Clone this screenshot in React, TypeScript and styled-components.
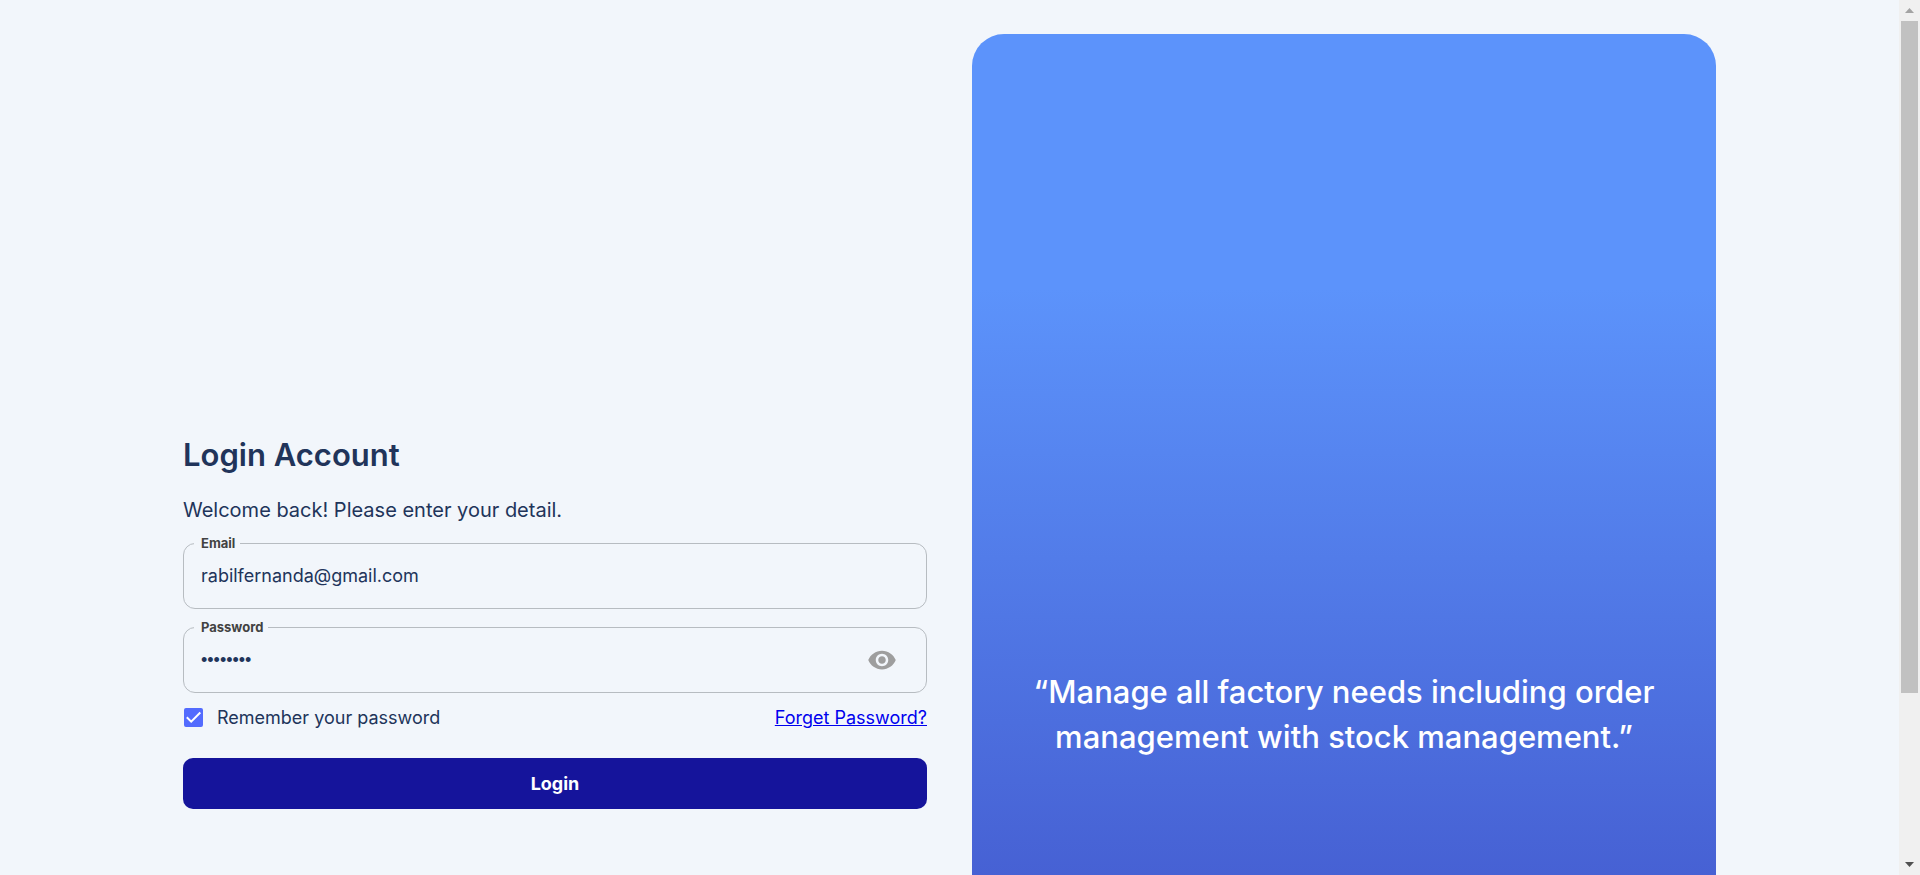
import { useState } from 'react';
import styled, { createGlobalStyle } from 'styled-components';
import { MdVisibility } from 'react-icons/md';

const GlobalStyle = createGlobalStyle`
  *, *::before, *::after { box-sizing: border-box; }
  body {
    margin: 0;
    background: #f2f6fb;
    color: #21345a;
    font-family: Inter, "Open Sans", sans-serif;
  }
`;

const Shell = styled.div`
  display: flex;
  height: 100vh;
  overflow: hidden;
`;

const Viewport = styled.main`
  flex: 1;
  min-width: 0;
  overflow-y: auto;
  scrollbar-width: none;
`;

const Columns = styled.div`
  display: grid;
  grid-template-columns: 1fr 1fr;
  gap: 45px;
  max-width: 1533px;
  margin: 0 auto;
  padding: 34px 0;
`;

const LoginForm = styled.form`
  display: flex;
  flex-direction: column;
  padding-top: 400px;
`;

const Title = styled.h1`
  margin: 0;
  font-size: 31px;
  line-height: 42px;
  font-weight: 600;
`;

const Subtitle = styled.p`
  margin: 20px 0 12px;
  font-size: 20px;
  line-height: 28px;
`;

const Field = styled.fieldset`
  margin: 0 0 11px;
  padding: 0 10px;
  min-width: 0;
  height: 73px;
  border: 1px solid #b7bcc1;
  border-radius: 12px;
`;

const Legend = styled.legend`
  padding: 0 5px 0 7px;
  font-size: 13px;
  line-height: 14px;
  font-weight: 700;
  color: #424242;
`;

const FieldRow = styled.div`
  display: flex;
  align-items: center;
  height: 58px;
  padding: 0 19px 6px 7px;
`;

const Input = styled.input`
  flex: 1;
  min-width: 0;
  padding: 0;
  border: 0;
  outline: 0;
  background: transparent;
  color: inherit;
  font: inherit;
  font-size: 18px;
  line-height: 24px;

  &[type='password'] {
    font-family: "Liberation Sans", sans-serif;
  }
`;

const IconButton = styled.button`
  display: flex;
  padding: 0;
  border: 0;
  background: none;
  color: #9e9e9e;
  font-size: 30px;
  cursor: pointer;
`;

const Options = styled.div`
  display: flex;
  align-items: center;
  justify-content: space-between;
  font-size: 18px;
  line-height: 28px;
`;

const Remember = styled.label`
  display: flex;
  align-items: center;
  gap: 14px;
`;

const CheckCell = styled.span`
  display: grid;
  place-items: center;
  margin-left: 1px;
  padding-bottom: 2px;

  > * { grid-area: 1 / 1; }
  svg { pointer-events: none; }
`;

const Checkbox = styled.input`
  appearance: none;
  width: 19px;
  height: 19px;
  margin: 0;
  border: 2px solid #536bfe;
  border-radius: 2px;

  &:checked { background: #536bfe; }
`;

const Link = styled.a`
  color: #0000ee;
`;

const Submit = styled.button`
  height: 51px;
  margin-top: 26px;
  border: 0;
  border-radius: 10px;
  background: #15149b;
  color: #fff;
  font: inherit;
  font-size: 18px;
  font-weight: 700;
  cursor: pointer;
`;

const Hero = styled.section`
  display: flex;
  justify-content: center;
  min-height: 1016px;
  padding: 635px 48px 0;
  border-radius: 32px;
  background: linear-gradient(180deg, #5c93fb 25%, #4052c8 100%);
`;

const Quote = styled.p`
  margin: 0;
  max-width: 640px;
  color: #fff;
  font-size: 31px;
  line-height: 45px;
  font-weight: 500;
  text-align: center;
`;

const ScrollTrack = styled.div`
  display: flex;
  flex-direction: column;
  align-items: center;
  width: 21px;
  background: #f0f0f0;
`;

const ScrollArrow = styled.div`
  display: grid;
  place-items: center;
  height: 21px;
`;

const ScrollRail = styled.div`
  flex: 1;
  width: 17px;
`;

const ScrollThumb = styled.div`
  height: calc(81% - 3px);
  background: #c1c1c1;
`;

export default function App() {
  const [shown, setShown] = useState(false);
  const [remember, setRemember] = useState(true);

  return (
    <Shell>
      <GlobalStyle />
      <Viewport>
        <Columns>
          <LoginForm onSubmit={(e) => e.preventDefault()}>
            <Title>Login Account</Title>
            <Subtitle>Welcome back! Please enter your detail.</Subtitle>
            <Field>
              <Legend><label htmlFor="email">Email</label></Legend>
              <FieldRow>
                <Input id="email" type="email" defaultValue="rabilfernanda@gmail.com" />
              </FieldRow>
            </Field>
            <Field>
              <Legend><label htmlFor="password">Password</label></Legend>
              <FieldRow>
                <Input id="password" type={shown ? 'text' : 'password'} defaultValue="password" />
                <IconButton type="button" aria-label="Toggle password visibility" onClick={() => setShown(!shown)}>
                  <MdVisibility />
                </IconButton>
              </FieldRow>
            </Field>
            <Options>
              <Remember>
                <CheckCell>
                  <Checkbox type="checkbox" checked={remember} onChange={(e) => setRemember(e.target.checked)} />
                  {remember && (
                    <svg width="19" height="19" viewBox="0 0 19 19" fill="none" stroke="#fff" strokeWidth="2">
                      <path d="M2.8 9.2 7.2 13.6 16.3 4.5" />
                    </svg>
                  )}
                </CheckCell>
                Remember your password
              </Remember>
              <Link href="#forget">Forget Password?</Link>
            </Options>
            <Submit type="submit">Login</Submit>
          </LoginForm>
          <Hero>
            <Quote>“Manage all factory needs including order management with stock management.”</Quote>
          </Hero>
        </Columns>
      </Viewport>
      <ScrollTrack aria-hidden="true">
        <ScrollArrow>
          <svg width="9" height="5" viewBox="0 0 9 5"><path d="M0 5 4.5 0 9 5Z" fill="#a3a3a3" /></svg>
        </ScrollArrow>
        <ScrollRail><ScrollThumb /></ScrollRail>
        <ScrollArrow>
          <svg width="9" height="5" viewBox="0 0 9 5"><path d="M0 0H9L4.5 5Z" fill="#505050" /></svg>
        </ScrollArrow>
      </ScrollTrack>
    </Shell>
  );
}
